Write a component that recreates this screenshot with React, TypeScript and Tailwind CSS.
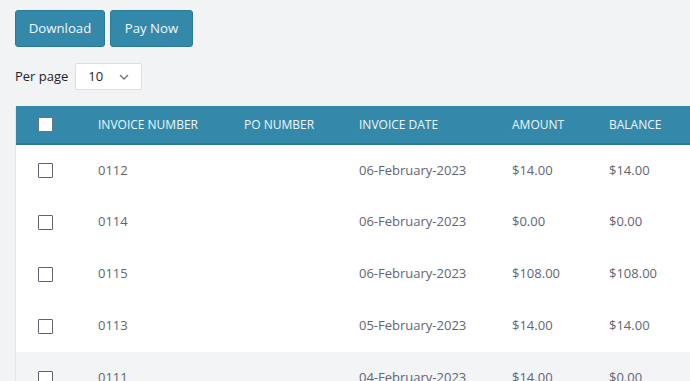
import React from 'react'

const rows = [
  { no: '0112', po: '', date: '06-February-2023', amount: '$14.00', balance: '$14.00' },
  { no: '0114', po: '', date: '06-February-2023', amount: '$0.00', balance: '$0.00' },
  { no: '0115', po: '', date: '06-February-2023', amount: '$108.00', balance: '$108.00' },
  { no: '0113', po: '', date: '05-February-2023', amount: '$14.00', balance: '$14.00' },
  { no: '0111', po: '', date: '04-February-2023', amount: '$14.00', balance: '$0.00' },
]

function Box({ head }: { head?: boolean }) {
  return (
    <span
      className={
        'block w-[15px] h-[15px] rounded-[1px] border ' +
        (head ? 'bg-white border-[#6b7280]' : 'bg-white border-[#5f6272]')
      }
    />
  )
}

export default function App() {
  return (
    <div
      className="w-[690px] h-[381px] overflow-hidden bg-[#f2f3f5] pl-[15px]"
      style={{ fontFamily: '"Open Sans", "Liberation Sans", sans-serif' }}
    >
      {/* Actions */}
      <div className="flex gap-[5px] pt-[10px]">
        <button className="h-[37px] w-[90px] rounded-[3px] border border-[#2a7b98] bg-[#3489aa] text-[13.2px] text-[#f1f6f8]">
          Download
        </button>
        <button className="h-[37px] w-[83px] rounded-[3px] border border-[#2a7b98] bg-[#3489aa] text-[13.2px] text-[#f1f6f8]">
          Pay Now
        </button>
      </div>

      {/* Per page */}
      <div className="flex items-center gap-[7px] mt-[16px] h-[27px]">
        <span className="text-[13px] text-[#1f2328]">Per page</span>
        <div className="flex items-center h-[27px] w-[67px] bg-white border border-[#dcdee2] rounded-[2px] pl-[12px]">
          <span className="text-[13px] text-[#1f2328]">10</span>
          <svg className="ml-[16px]" width="10" height="6" viewBox="0 0 10 6" fill="none">
            <path d="M1 1l4 4 4-4" stroke="#6b7280" strokeWidth="1.3" />
          </svg>
        </div>
      </div>

      {/* Table */}
      <div className="mt-[16px] w-[800px] border-l border-[#e4e6ea] bg-white">
        <table className="border-collapse table-fixed w-[800px] text-left">
          <thead>
            <tr className="h-[38px] bg-[#3489aa] border-b-2 border-[#2a7893]">
              <th className="w-[82px] pl-[22px] font-normal">
                <Box head />
              </th>
              <th className="w-[146px] font-normal text-[12px] text-[#eef6f9]">INVOICE NUMBER</th>
              <th className="w-[115px] font-normal text-[12px] text-[#eef6f9]">PO NUMBER</th>
              <th className="w-[153px] font-normal text-[12px] text-[#eef6f9]">INVOICE DATE</th>
              <th className="w-[97px] font-normal text-[12px] text-[#eef6f9]">AMOUNT</th>
              <th className="font-normal text-[12px] text-[#eef6f9]">BALANCE</th>
            </tr>
          </thead>
          <tbody className="text-[13px] text-[#5f6673]">
            {rows.map((r, i) => (
              <tr key={r.no} className={'h-[52px] ' + (i === 4 ? 'bg-[#f3f4f6]' : 'bg-white')}>
                <td className="pl-[22px]">
                  <Box />
                </td>
                <td>{r.no}</td>
                <td>{r.po}</td>
                <td>{r.date}</td>
                <td>{r.amount}</td>
                <td>{r.balance}</td>
              </tr>
            ))}
          </tbody>
        </table>
      </div>
    </div>
  )
}
